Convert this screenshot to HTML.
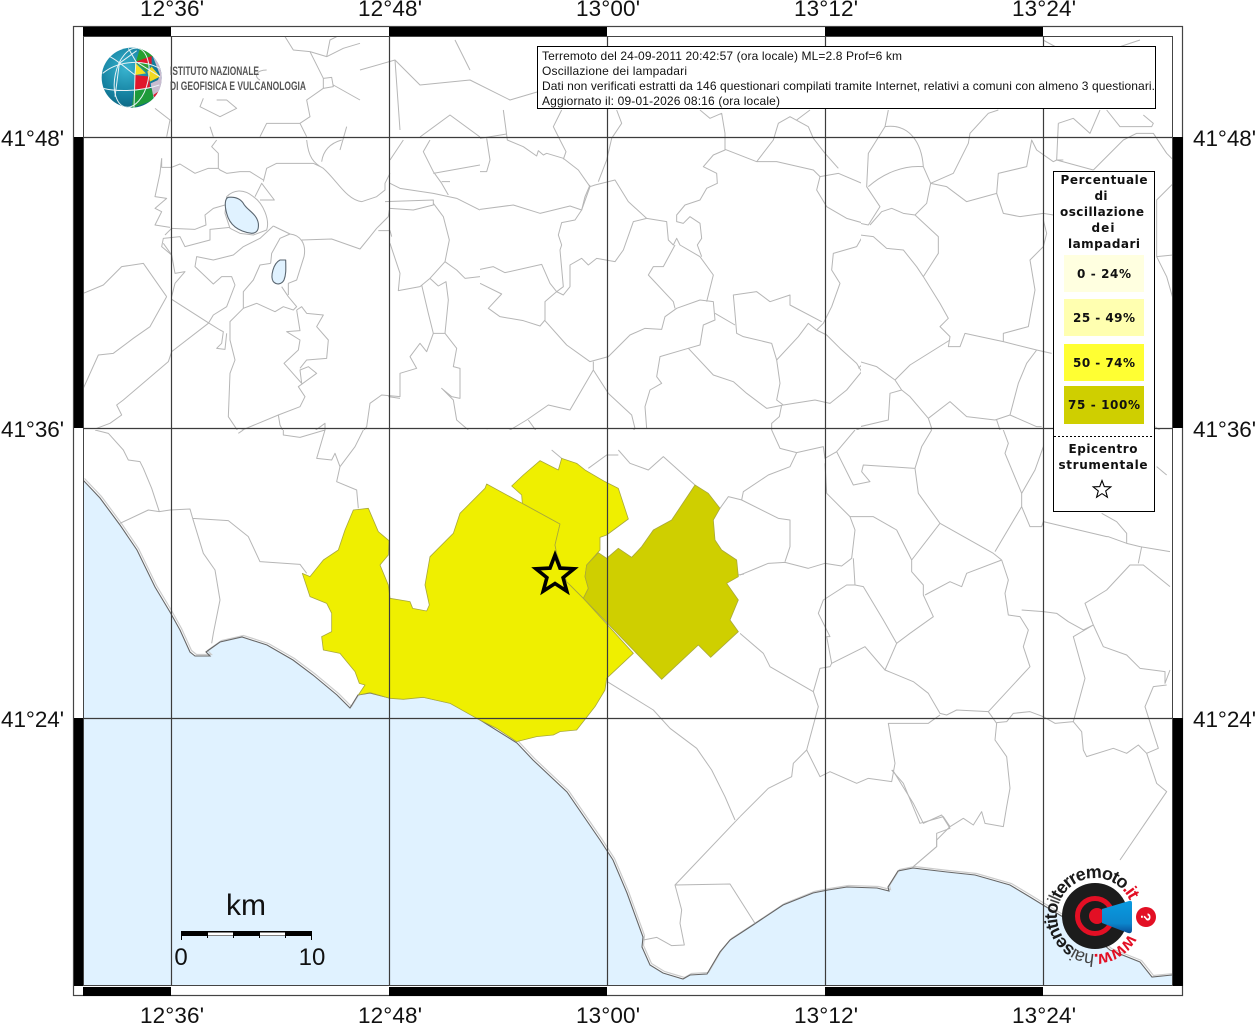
<!DOCTYPE html>
<html><head><meta charset="utf-8"><style>
html,body{margin:0;padding:0;background:#fff;width:1256px;height:1024px;overflow:hidden}
svg{display:block}
.b path{fill:none;stroke:#b6b6b6;stroke-width:3;stroke-linejoin:round}
.ax{font:22.5px "Liberation Sans",sans-serif;fill:#111}
.info{font:12px "Liberation Sans",sans-serif;fill:#111}
.lg{font:bold 12px "DejaVu Sans",sans-serif;fill:#111;text-anchor:middle}
</style></head><body>
<svg width="1256" height="1024" viewBox="0 0 1256 1024" xmlns="http://www.w3.org/2000/svg">
<defs>
<clipPath id="mp"><rect x="83" y="36" width="1090" height="950"/></clipPath>
<clipPath id="c1"><rect x="83" y="137" width="397" height="293"/></clipPath>
<clipPath id="c2"><rect x="480" y="108" width="381" height="322"/></clipPath>
<clipPath id="c3"><rect x="740" y="430" width="433" height="452"/></clipPath>
<clipPath id="c4"><rect x="861" y="108" width="312" height="322"/></clipPath>
<clipPath id="c5"><rect x="83" y="430" width="297" height="300"/></clipPath>
<radialGradient id="gl" cx=".4" cy=".35" r=".75"><stop offset="0" stop-color="#38b3cf"/><stop offset=".6" stop-color="#14809f"/><stop offset="1" stop-color="#0b5d78"/></radialGradient>
<linearGradient id="cn" x1="0" y1="0" x2="0" y2="1"><stop offset="0" stop-color="#0a9be0"/><stop offset=".7" stop-color="#0b86cc"/><stop offset="1" stop-color="#0a4f98"/></linearGradient>
<clipPath id="gc"><circle cx="215" cy="173" r="90"/></clipPath>
</defs>
<rect width="1256" height="1024" fill="#fff"/>
<g clip-path="url(#mp)">
<polygon fill="#e0f2ff" points="83,480 100,498 120,525 137,550 155,587 170,612 180,630 190,652 195,656 210,656 206,652 220,642 242,637 267,645 293,660 313,675 337,695 350,708 358,695 370,693 390,698 423,697 450,703 477,718 517,743 533,760 567,792 600,840 613,860 627,893 643,937 642,947 650,965 663,973 683,979 690,975 707,974 720,952 730,940 753,925 783,905 813,893 828,890 847,887 877,888 889,891 888,887 898,871 913,868 947,872 975,875 1010,885 1030,897 1043,905 1090,933 1110,950 1140,962 1152,977 1172,975 1173,986 83,986"/>
<polyline fill="none" stroke="#ccc" stroke-width="1.2" transform="translate(1.5,-1.5)" points="83,480 100,498 120,525 137,550 155,587 170,612 180,630 190,652 195,656 210,656 206,652 220,642 242,637 267,645 293,660 313,675 337,695 350,708 358,695 370,693 390,698 423,697 450,703 477,718 517,743 533,760 567,792 600,840 613,860 627,893 643,937 642,947 650,965 663,973 683,979 690,975 707,974 720,952 730,940 753,925 783,905 813,893 828,890 847,887 877,888 889,891 888,887 898,871 913,868 947,872 975,875 1010,885 1030,897 1043,905 1090,933 1110,950 1140,962 1152,977 1172,975"/>
<polyline fill="none" stroke="#666" stroke-width="1.1" points="83,480 100,498 120,525 137,550 155,587 170,612 180,630 190,652 195,656 210,656 206,652 220,642 242,637 267,645 293,660 313,675 337,695 350,708 358,695 370,693 390,698 423,697 450,703 477,718 517,743 533,760 567,792 600,840 613,860 627,893 643,937 642,947 650,965 663,973 683,979 690,975 707,974 720,952 730,940 753,925 783,905 813,893 828,890 847,887 877,888 889,891 888,887 898,871 913,868 947,872 975,875 1010,885 1030,897 1043,905 1090,933 1110,950 1140,962 1152,977 1172,975"/>

<!-- zone 1 -->
<g clip-path="url(#c1)">
<g class="b" transform="translate(80,140) scale(.33333)">
<path d="M245,55L245,82L275,82L300,72L345,100L385,85L415,85L420,90L440,100L480,95L510,95L550,120M415,85L415,40L395,20L410,0"/>
<path d="M550,125L560,85L590,70L700,70L725,82M680,0C685,50 700,70 730,85C770,120 800,180 845,185L890,170L915,150L915,130L930,100M725,65C730,30 750,10 785,0"/>
<path d="M440,170C460,150 490,145 520,170C550,190 570,240 560,270L520,285L480,280L450,265L435,220Z"/>
<path d="M525,170L545,130L583,180L540,180M435,195L400,205L375,225L378,255L345,268L275,265L255,285M450,262L390,268L390,300L315,320L300,290L250,295L245,320L275,345"/>
<path d="M580,258L540,295L490,320L460,345L400,360L350,350L345,380L400,432L425,410L455,410L465,435L440,500L400,525L385,550L275,635L265,665L130,780L110,795L125,825L90,850L50,865"/>
<path d="M580,258L630,282L600,295L575,340L572,370M630,282C660,285 680,310 672,350L650,420L625,430L625,465M665,300L755,297L840,327L870,290L890,265L925,230L928,210M895,272L930,272L935,290"/>
<path d="M572,370L540,375L520,420L490,455L490,505L530,490L585,515L610,500L640,510L650,500L625,470L605,440"/>
<path d="M490,505L450,545L450,600L465,660L450,700L445,830L475,875L595,825L660,800L675,770L655,740L710,700L685,680L660,690L665,730L612,670L655,630L660,600L620,575L660,572L650,510"/>
<path d="M650,510L665,500L680,520L730,525L710,560L745,600L740,655L680,660L660,685"/>
<path d="M275,478L380,545L420,570L430,575L425,610L410,625L435,628L440,580M260,470L190,370L125,380L70,435L10,460M260,470L210,560L160,595L100,640L55,645L10,745"/>
<path d="M245,55L240,100L225,170L260,175L225,205L245,215L225,255L270,262M250,310L275,345L285,400L315,395L285,430L275,470"/>
<path d="M930,130L960,145L1060,160L1130,175L1200,210M915,185L1060,180L1060,195L1000,210L930,205M1060,190L1090,230L1108,300L1095,365L1050,415L1020,440L955,452L960,400L930,310M1095,365L1130,390L1155,415L1200,410"/>
<path d="M1025,435L1045,520L1060,580L1095,580L1105,480L1098,425L1075,438L1050,415M1060,580L1040,635L1020,610L990,650L1010,685L960,700L960,770L905,765L870,790L860,860L830,900M1095,580L1130,625L1120,680L1140,685L1140,775L1115,770L1085,745L1120,780L1130,840L1165,870M925,770L960,775"/>
<path d="M595,825L600,855L615,885L680,890L735,850L735,900M1050,0L1030,35L1060,95L1085,130L1105,165M1060,100L1200,75M1085,125L1110,125M930,60L970,0"/>
</g></g>
<!-- zone 2 -->
<g clip-path="url(#c2)">
<g class="b" transform="translate(480,110) scale(.33333)">
<path d="M70,0L82,90L130,110L170,138L175,122L190,135L200,130L250,145L295,180L330,230M0,85L80,72M20,85L30,150L20,185L0,185M245,0L220,50L240,90L258,125L250,148"/>
<path d="M0,298L100,285L180,310L270,288L305,300L330,230L345,225L405,210L445,275L500,325L460,335L430,420L405,455L350,445L325,465L305,445L270,465L270,530L250,555L230,545"/>
<path d="M330,225L315,260L305,300L285,330L245,338L235,375L245,405L240,420L250,530L230,545L195,575L195,630L180,648L130,632L60,620L25,595L65,552L0,520M0,478L40,470L75,488L185,463L210,520L230,545"/>
<path d="M195,632L260,705L330,755L385,740L450,675L495,655L545,658L555,620L590,595L660,570L700,575L705,630L670,645L660,705L625,715L540,740L530,800L545,820L510,840L495,890L500,955"/>
<path d="M340,755L340,780L270,900L205,885L140,930L90,960L50,975L20,960M340,780L385,850L455,915L465,955L430,1000L430,1020M145,930L210,1020M355,215L380,150L395,85L425,40L410,0"/>
<path d="M500,325L560,335L565,390L580,405L590,385L600,405L660,440L700,495L680,575M585,405L550,470L520,470L505,495L580,575L585,595"/>
<path d="M660,0L690,25L725,10L735,70L735,120L700,135L670,170L710,190L712,220L680,235L660,270L615,285L590,315L590,335L610,340L630,320L660,340L665,385L652,405L665,440"/>
<path d="M735,118L830,155L890,155L1000,180L1020,200L1075,190L1165,228L1200,210M830,155L880,90L895,40L930,20L985,50L1000,85L1035,130L1075,175M950,30L990,0"/>
<path d="M1020,200L1010,240L1040,290L1100,325L1170,345L1200,310M1200,380L1150,375L1130,410L1060,430L1055,480L1080,520L1055,590L1045,610L1030,640L1010,660L985,640L955,680L890,750L875,700L790,680L770,670L765,610L760,555L830,545L870,575L930,555L930,585L1025,635"/>
<path d="M1010,660L1040,675L1080,715L1130,760L1145,785L1100,840L1050,880L1005,870L910,885L860,895L800,850L760,815L700,795L625,715M705,610L765,645M890,750L900,820L890,870L910,885M905,885L898,920L875,940L875,975L895,1020M1135,775L1160,750L1200,765M990,1020L1030,1010M1060,1020L1130,960L1200,930"/>
</g></g>
<!-- zone 3 -->
<g clip-path="url(#c3)">
<g class="b" transform="translate(740,430) scale(.33333)">
<path d="M95,0L120,55L170,68L250,50L255,85L290,65L345,0M290,65L340,165L390,155L365,125L370,105L525,115L535,190L600,280L760,370L785,390M525,115L545,50L575,0"/>
<path d="M170,68L150,110L85,135L10,185L5,210L115,265L150,270L150,350L135,395M0,435L85,400L135,397L205,415L255,400L305,408L335,385L345,300L330,260L260,190L255,100"/>
<path d="M330,260L400,260L470,300L515,390L515,425L550,465L550,495L580,560L510,610L470,640L435,720M600,280L515,390M785,390L680,430L665,470L630,455L555,495"/>
<path d="M790,0L805,40L795,70L845,190L885,120L910,50M845,190L845,230L765,365M845,230L870,290L905,290L910,275L1100,320L1105,320L1160,340L1200,350L1290,365"/>
<path d="M785,390L805,450L795,490L805,555L840,560L865,600L850,650L870,710L745,845L650,840L620,855L600,850L565,790L520,755L435,720L375,650L275,700L260,620L270,620L235,550L250,510L320,465L345,465L370,470L430,570L470,640M345,465L340,385"/>
<path d="M0,610L70,670L90,710L220,785L235,830L200,960L160,1000L155,1040L85,1075L0,1160M220,785L240,715L270,710L275,700"/>
<path d="M200,960L240,1040L270,1025L350,1060L385,1045L455,1055L465,1000L445,880L490,880L565,880L600,855"/>
<path d="M455,1020L490,1060L540,1180L610,1160L630,1190L670,1165L700,1185L725,1145L735,1180L790,1190L800,1130L810,1075L800,980L765,930L770,880L745,845"/>
<path d="M770,878L800,875L820,850L870,845L910,860L945,880L1000,875L1025,905L1030,960L1040,980L1120,955L1160,970L1195,945L1220,970L1255,955L1215,830L1240,770L1280,765"/>
<path d="M1000,875L1035,745L1000,620L1060,585L1030,600L985,575L950,550L910,545L845,540M1060,585L1035,520L1100,480L1170,405L1210,405L1290,470M1195,400L1205,350M1060,585L1090,650L1160,675L1200,715L1275,725L1275,760L1290,720"/>
<path d="M1220,970L1250,1060L1280,1085L1140,1290M630,1190L590,1230L590,1250L520,1310M1085,250L1130,275L1160,310L1160,340M1250,110L1280,135"/>
</g></g>
<!-- zone 4 -->
<g clip-path="url(#c4)">
<g class="b" transform="translate(860,110) scale(.33333)">
<path d="M85,0L75,50L25,130L20,230L60,290L25,345L0,340M75,50C150,40 185,100 190,170M25,230C70,190 130,165 190,170L212,220L200,280L165,315L130,310L95,295L65,305L30,345"/>
<path d="M212,220L280,190L325,100L330,70L385,10L415,0M212,220L260,230L320,275L410,250L415,190L500,170L515,90L530,120L580,155L590,150L610,150M410,250L430,310L480,320L550,310L580,315"/>
<path d="M165,315L235,380L235,430L190,500L170,470L130,420L80,415L40,380L0,375M190,500L215,540L240,580L265,625L240,650L270,680L265,710L300,710L315,670L360,680L430,695L430,670L505,650L525,540L510,450L550,410L560,370L550,330M430,695L530,720L575,730"/>
<path d="M270,690L150,765L105,810L50,770L0,755M105,810L125,840L90,850L85,930L0,950M125,840L150,860L205,925L270,875L320,920L405,930L450,915L475,820L500,760L530,720M205,925L215,955L200,990M410,930L430,990M450,915L530,950L545,950"/>
<path d="M595,40L590,150L700,180M595,40L640,25L690,70L720,0M740,0L780,50L875,50L880,40L850,15M700,180L790,90L830,70L880,70L920,130L940,150M940,220L890,270L890,440L920,500L940,570M890,440L940,435M885,950L940,990"/>
</g></g>
<!-- zone 5 -->
<g clip-path="url(#c5)">
<g class="b" transform="translate(80,430) scale(.33333)">
<path d="M45,0L85,10L130,60L145,90L180,95L190,115L215,175L238,245L205,240L120,280M238,245L270,240L330,237L338,265L445,272L505,320L540,395L660,403L680,430M338,265L370,370L405,420L420,510L400,610L395,640"/>
<path d="M475,10L490,0M610,0L610,15L660,22L735,0L710,85L755,90L765,70L780,110L770,155L830,180L835,235M780,110L825,50L850,0"/>
</g></g>
<!-- zone 6 -->
<g class="b" transform="translate(500,660) scale(.33333)">
<path d="M322,65L460,150L510,205L590,265L635,330L675,410L705,480M720,470L525,675L690,672L765,790M525,675L545,750L540,790L553,855L515,857L470,832L430,840"/>
<path d="M1178,330L1240,430L1270,490L1325,465L1350,505L1310,520L1310,560L1240,620"/>
</g>
<!-- zone 7 -->
<g class="b" transform="translate(290,450) scale(.33333)">
<path d="M985,0L1020,40L1075,60L1120,20L1215,105M1290,175L1315,140L1356,150M1345,375L1362,372M895,55L950,15L985,15M785,0L815,25"/>
</g>
<!-- zone 8 -->
<g class="b" transform="translate(60,20) scale(.33333)">
<path d="M675,50L700,90L750,95L800,110L810,60L830,50M800,110L850,85L900,70M790,175L815,172L820,200L790,205L790,175M750,95L790,175M820,195L900,240M790,205L740,240L750,290L720,310L620,310L600,350M620,150C590,150 580,170 600,180M430,235L420,260L480,290L530,265L500,240L470,240M285,265L330,300L320,350M450,320L460,350M740,350L720,310M860,320L840,390"/>
</g>
<g class="b" transform="scale(.33333)">
<path d="M1080,210L1185,180L1260,255L1410,240L1530,300L1611,276M1185,180L1200,390M1260,411L1350,345L1440,411M1365,120L1410,210"/>
<path d="M3129,120L3240,180L3420,120M3480,111L3510,60"/>
</g>

<!-- filled zones -->
<g transform="translate(290,450) scale(.33333)" stroke="#a8a83c" stroke-width="2.4" stroke-linejoin="round">
<path fill="#efef00" d="M590,102L810,222L795,285L800,310L830,395L880,445L1030,610L950,685L945,720L915,770L860,840L810,845L790,855L740,860L680,875L620,835L560,805L480,760L400,742L340,748L300,745L240,728L205,735L225,705L208,700L195,665L150,610L100,600L95,560L125,545L125,490L110,460L60,440L37,370L60,380L100,330L145,300L165,240L190,180L235,175L265,245L297,272L295,315L270,345L295,405L300,445L360,455L368,475L410,483L418,465L405,405L420,320L490,250L510,190L585,115Z"/>
<path fill="#efef00" d="M665,108L700,75L750,32L805,60L815,25L860,40L885,60L945,95L985,115L1015,207L950,255L930,262L930,300L890,345L885,380L895,415L880,445L830,395L800,310L795,285L810,222L697,160L695,135Z"/>
<path fill="#cfcf00" d="M925,308L950,325L985,295L1025,322L1055,290L1090,240L1145,210L1215,105L1255,130L1290,175L1270,210L1275,270L1295,300L1340,330L1345,380L1310,400L1345,450L1320,510L1345,545L1262,622L1225,585L1115,688L880,445L895,415L885,380L890,345Z"/>
</g>
<!-- lakes -->
<g transform="translate(80,140) scale(.33333)" fill="#e0f2ff" stroke="#5a6670" stroke-width="3.3" stroke-linejoin="round">
<path d="M445,172C465,170 480,175 490,190C500,210 530,220 535,250C537,270 530,280 515,280C480,275 450,260 440,220C433,195 435,175 445,172Z"/>
<path d="M600,360L617,360C618,390 618,405 612,420C605,433 590,436 580,425C570,410 580,370 600,360Z"/>
</g>
</g>

<!-- frame -->
<rect x="73.5" y="26.5" width="1109" height="969" fill="none" stroke="#444" stroke-width="1.2"/>
<rect x="83.5" y="36.5" width="1089" height="949" fill="none" stroke="#444" stroke-width="1"/>
<g fill="#000">
<rect x="83" y="27" width="88" height="9"/><rect x="389" y="27" width="218" height="9"/><rect x="825" y="27" width="218" height="9"/>
<rect x="83" y="987" width="88" height="9"/><rect x="389" y="987" width="218" height="9"/><rect x="825" y="987" width="218" height="9"/>
<rect x="74" y="137" width="9" height="291"/><rect x="74" y="718" width="9" height="268"/>
<rect x="1173" y="137" width="10" height="291"/><rect x="1173" y="718" width="10" height="268"/>
</g>
<!-- grid -->
<g stroke="#3c3c3c" stroke-width="1.2" fill="none">
<path d="M171.5,36V986M389.5,36V986M607.5,36V986M825.5,36V986M1043.5,36V986M83,137.5H1173M83,428.5H1173M83,718.5H1173"/>
</g>
<!-- epicentre star -->
<polygon points="555,555 560,568.1 574,568.8 563.1,577.6 566.8,591.2 555,583.5 543.2,591.2 546.9,577.6 536,568.8 550,568.1" fill="#efef00" stroke="#000" stroke-width="3.6" stroke-miterlimit="6"/>

<!-- axis labels -->
<g class="ax" text-anchor="middle">
<text x="172" y="16" textLength="64">12°36'</text><text x="390" y="16" textLength="64">12°48'</text><text x="608" y="16" textLength="64">13°00'</text><text x="826" y="16" textLength="64">13°12'</text><text x="1044" y="16" textLength="64">13°24'</text>
<text x="172" y="1023" textLength="64">12°36'</text><text x="390" y="1023" textLength="64">12°48'</text><text x="608" y="1023" textLength="64">13°00'</text><text x="826" y="1023" textLength="64">13°12'</text><text x="1044" y="1023" textLength="64">13°24'</text>
</g>
<g class="ax">
<text x="1" y="146" textLength="63">41°48'</text><text x="1" y="437" textLength="63">41°36'</text><text x="1" y="727" textLength="63">41°24'</text>
<text x="1193" y="146" textLength="63">41°48'</text><text x="1193" y="437" textLength="63">41°36'</text><text x="1193" y="727" textLength="63">41°24'</text>
</g>

<!-- info box -->
<rect x="537.5" y="46.5" width="618" height="62" fill="#fff" stroke="#000" stroke-width="1"/>
<g class="info">
<text x="542" y="60" textLength="360">Terremoto del 24-09-2011 20:42:57 (ora locale) ML=2.8 Prof=6 km</text>
<text x="542" y="75" textLength="145">Oscillazione dei lampadari</text>
<text x="542" y="90" textLength="613">Dati non verificati estratti da 146 questionari compilati tramite Internet, relativi a comuni con almeno 3 questionari.</text>
<text x="542" y="105" textLength="238">Aggiornato il: 09-01-2026 08:16 (ora locale)</text>
</g>

<!-- legend -->
<rect x="1053.5" y="171.5" width="101" height="340" fill="#fff" stroke="#000" stroke-width="1"/>
<g class="lg">
<text x="1104" y="184" textLength="87">Percentuale</text>
<text x="1101" y="200" textLength="13">di</text>
<text x="1102" y="216" textLength="84">oscillazione</text>
<text x="1103" y="232" textLength="23">dei</text>
<text x="1104" y="248" textLength="72">lampadari</text>
</g>
<rect x="1064" y="255" width="80" height="37" fill="#ffffe0"/>
<rect x="1064" y="299" width="80" height="37" fill="#ffffb0"/>
<rect x="1064" y="344" width="80" height="37" fill="#ffff33"/>
<rect x="1064" y="386" width="80" height="38" fill="#cfcf00"/>
<g class="lg">
<text x="1104" y="278" textLength="54">0 - 24%</text>
<text x="1104" y="322" textLength="62">25 - 49%</text>
<text x="1104" y="367" textLength="62">50 - 74%</text>
<text x="1104" y="409" textLength="72">75 - 100%</text>
</g>
<line x1="1054" y1="436.5" x2="1154" y2="436.5" stroke="#000" stroke-width="1" stroke-dasharray="2,2"/>
<g class="lg">
<text x="1103" y="453" textLength="69">Epicentro</text>
<text x="1103" y="469" textLength="89">strumentale</text>
</g>
<polygon points="1102,480.5 1104.3,486.6 1110.8,486.9 1105.7,490.9 1107.4,497.2 1102,493.6 1096.6,497.2 1098.3,490.9 1093.2,486.9 1099.7,486.6" fill="#fff" stroke="#000" stroke-width="1.1"/>

<!-- INGV logo -->
<g transform="translate(60,20) scale(.33333)">
<circle cx="215" cy="173" r="90" fill="url(#gl)"/>
<g clip-path="url(#gc)">
<path fill="#27a02e" d="M228,125L240,85L280,100L280,110Z"/>
<path fill="#e0162b" d="M228,125L275,108L275,135Z"/>
<path fill="#c9bcd0" d="M275,100L310,150L305,230L280,215L300,165Z"/>
<path fill="#2f9e35" d="M228,128L272,130L258,155Z"/>
<path fill="#f5e020" d="M225,128L258,160L225,165Z"/>
<path fill="#f0d820" d="M262,155L275,140L300,170L270,185Z"/>
<path fill="#e0162b" d="M225,165L268,170L270,205L222,208Z"/>
<path fill="#c9bcd0" d="M272,190L305,175L305,215L280,235Z"/>
<path fill="#1e9a3a" d="M222,210L275,205L282,240L215,265Z"/>
<path fill="#e0162b" d="M280,225L295,215L285,235Z"/>
</g>
<g fill="none" stroke="#e8f2f5" stroke-width="3" clip-path="url(#gc)">
<ellipse cx="215" cy="173" rx="50" ry="90" transform="rotate(12 215 173)"/>
<path d="M205,85L228,125L225,165L222,262M230,92L178,130L165,230M128,160C170,125 240,115 300,145M130,205C170,215 240,215 298,195M228,125L300,170M150,110C170,120 180,130 225,165"/>
</g>
</g>
<text x="170" y="75" font-family="Liberation Sans,sans-serif" font-size="12" fill="#555" textLength="89" lengthAdjust="spacingAndGlyphs" font-weight="bold">ISTITUTO NAZIONALE</text>
<text x="170" y="90" font-family="Liberation Sans,sans-serif" font-size="12" fill="#555" textLength="136" lengthAdjust="spacingAndGlyphs" font-weight="bold">DI GEOFISICA E VULCANOLOGIA</text>

<!-- scale -->
<text x="226" y="915" font-family="Liberation Sans,sans-serif" font-size="30" fill="#111">km</text>
<rect x="181" y="931" width="131" height="5" fill="#000"/>
<rect x="208" y="932.5" width="25" height="3" fill="#fff"/><rect x="260" y="932.5" width="25" height="3" fill="#fff"/>
<path d="M181.5,931V940M311.5,931V940M207.5,934V938M233.5,934V938M259.5,934V938M285.5,934V938" stroke="#000" stroke-width="1"/>
<text x="181" y="965" text-anchor="middle" font-family="Liberation Sans,sans-serif" font-size="24" fill="#111">0</text>
<text x="312" y="965" text-anchor="middle" font-family="Liberation Sans,sans-serif" font-size="24" fill="#111">10</text>

<!-- haisentito logo -->
<circle cx="1095" cy="916" r="33" fill="#1c1c1c"/>
<circle cx="1095" cy="916" r="17.5" fill="none" stroke="#e30f24" stroke-width="5"/>
<circle cx="1097" cy="916" r="8" fill="#e30f24"/>
<path d="M1102,909L1129,901Q1132,900 1132,903V930Q1132,934 1128,933L1102,923Z" fill="url(#cn)"/>
<circle cx="1146" cy="917" r="10" fill="#e30f24"/>
<text x="1146" y="922" text-anchor="middle" font-family="Liberation Sans,sans-serif" font-weight="bold" font-size="14" fill="#fff" transform="rotate(90 1146 917)">?</text>
<path id="arc" d="M1128.6,933.8A38,38 0 1 1 1129.7,900.5" fill="none"/>
<text font-family="Liberation Sans,sans-serif" font-size="18" letter-spacing="-1.25" fill="#1a1a1a"><textPath href="#arc"><tspan fill="#e30f24" font-weight="bold">www.</tspan><tspan fill="#444">hai</tspan><tspan font-weight="bold">sentito</tspan><tspan fill="#444">il</tspan><tspan font-weight="bold">terremoto</tspan><tspan fill="#e30f24" font-weight="bold">.it</tspan></textPath></text>
</svg>
</body></html>
